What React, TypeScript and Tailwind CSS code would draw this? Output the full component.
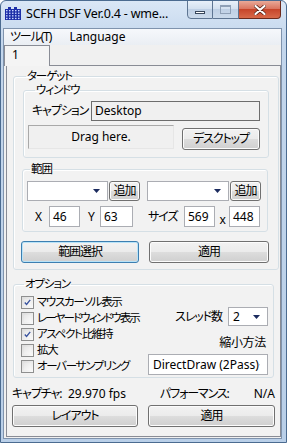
import React from 'react';

const ui = "font-['Noto_Sans','Noto_Sans_CJK_JP',sans-serif] [font-feature-settings:'palt'] tracking-[-1.1px] whitespace-nowrap";
const btnBg = 'bg-[linear-gradient(#f2f2f2,#ebebeb_50%,#dddddd_50%,#cfcfcf)]';

function Arrow() {
  return (
    <svg width="7" height="4" viewBox="0 0 7 4">
      <path d="M0 0h7L3.5 4z" fill="#1b2b5e" />
    </svg>
  );
}

function Combo({ className, value }: { className: string; value?: string }) {
  return (
    <div className={`${className} bg-white border border-[#abadb3] flex items-center pl-[4px] pr-[7px]`}>
      <span className="flex-1 text-[12px] leading-none tracking-normal">{value}</span>
      <Arrow />
    </div>
  );
}

function Btn({ className, children, focused }: { className: string; children: React.ReactNode; focused?: boolean }) {
  return (
    <div
      className={`${className} ${btnBg} flex items-center justify-center rounded-[3px] border text-[12px] leading-none ${
        focused ? 'border-[#3c7fb1] shadow-[inset_0_0_0_1px_#b8e3f8]' : 'border-[#707070] shadow-[inset_0_0_0_1px_#fcfcfc]'
      }`}
    >
      {children}
    </div>
  );
}

function Field({ className, value }: { className: string; value: string }) {
  return (
    <div className={`${className} bg-white border border-[#abadb3] flex items-center pl-[3px] text-[12px] leading-none tracking-normal`}>{value}</div>
  );
}

function Check({ checked, label, tight }: { checked?: boolean; label: string; tight?: boolean }) {
  return (
    <div className="h-[16px] flex items-center gap-[3px]">
      <div className="shrink-0 w-[13px] h-[13px] border border-[#8e8f8f] bg-[linear-gradient(135deg,#dcdcdc,#fbfbfb)] p-[2px]">
        <div className="w-full h-full bg-[linear-gradient(135deg,#e6e6e6,#f9f9f9)] flex items-center justify-center">
          {checked && (
            <svg width="9" height="9" viewBox="0 0 9 9">
              <path d="M1 4.5l2.3 2.5L8 1.2" stroke="#3b55a0" strokeWidth="1.8" fill="none" />
            </svg>
          )}
        </div>
      </div>
      <span className={`text-[11.5px] leading-none ${tight ? 'tracking-[-1.9px]' : 'tracking-[-1.3px]'}`}>{label}</span>
    </div>
  );
}

function Group({ className, label, children }: { className: string; label: string; children: React.ReactNode }) {
  return (
    <fieldset className={`${className} border border-[#d5dfe5] rounded-[3px] shadow-[inset_1px_1px_0_#fff]`}>
      <legend className="ml-[3px] px-[1px] text-[11.5px] leading-[12px]">{label}</legend>
      {children}
    </fieldset>
  );
}

function AppIcon() {
  return (
    <svg width="16" height="14" viewBox="0 0 16 14">
      <rect x="0" y="2" width="16" height="11" fill="#1d2fa8" />
      {[0, 1, 2, 3].map((r) =>
        [0, 1, 2, 3, 4].map((c) => (
          <rect key={`${r}-${c}`} x={1 + c * 3} y={3 + r * 2.6} width="1.5" height="1.3" fill="#c9d6ff" />
        ))
      )}
      <rect x="3" y="0" width="3" height="2" fill="#1d2fa8" />
      <rect x="9" y="0" width="3" height="2" fill="#1d2fa8" />
    </svg>
  );
}

export default function App() {
  return (
    <div className={`${ui} w-[287px] h-[443px] flex flex-col bg-[linear-gradient(#dae7f6,#c3d6ec_40px,#b9cfe8)] border border-[#4b6b90] rounded-t-[6px] overflow-hidden text-black text-[12px] leading-[14px]`}>
      {/* title bar */}
      <div className="h-[27px] flex items-start shrink-0">
        <div className="flex items-center gap-[5px] pl-[4px] pt-[6px]">
          <AppIcon />
          <span className="text-[12.5px] leading-none font-['Noto_Sans',sans-serif] tracking-[-0.2px]">SCFH DSF Ver.0.4 - wme...</span>
        </div>
        <div className="ml-auto mr-[5px] mt-[-1px] flex h-[19px]">
          <div className="w-[26px] border border-[#5e7592] rounded-bl-[4px] bg-[linear-gradient(#e8f0f9,#d2dfee_50%,#bfd0e5_50%,#cbdaeb)] flex items-center justify-center">
            <div className="w-[10px] h-[3px] border border-[#38475b] bg-white mt-[5px]" />
          </div>
          <div className="w-[26px] border border-l-0 border-[#5e7592] bg-[linear-gradient(#e8f0f9,#d2dfee_50%,#bfd0e5_50%,#cbdaeb)] flex items-center justify-center">
            <div className="w-[11px] h-[9px] border border-[#8fa0b6] border-t-[2px] bg-transparent" />
          </div>
          <div className="w-[42px] border border-l-0 border-[#6d2a1c] rounded-br-[4px] bg-[linear-gradient(#e9a998,#d9705a_50%,#c7452a_50%,#d86a4a)] flex items-center justify-center">
            <svg width="12" height="10" viewBox="0 0 12 10">
              <path d="M1.5 1l9 8M10.5 1l-9 8" stroke="#5a2418" strokeWidth="3.6" strokeLinecap="round" />
              <path d="M1.5 1l9 8M10.5 1l-9 8" stroke="#fff" strokeWidth="2.2" strokeLinecap="round" />
            </svg>
          </div>
        </div>
      </div>

      {/* client */}
      <div className="flex-1 ml-[2px] mr-[4px] mb-[3px] flex flex-col bg-[#f0f0f0] border border-[#7f93ad]">
        <div className="h-[16px] flex items-center gap-[18px] pl-[6px] bg-[linear-gradient(#f6f8fb,#eaeef3)]">
          <span>ツール(T)</span>
          <span className="tracking-normal">Language</span>
        </div>
        <div className="h-[20px] flex items-end shrink-0">
          <div className="relative z-10 w-[46px] h-[21px] mb-[-1px] border border-b-0 border-[#898c95] bg-[#f4f4f4] pl-[7px] pt-[3px] leading-none">
            1
          </div>
        </div>
        <div className="flex-1 ml-[2px] mb-[1px] border border-[#898c95] bg-[#f2f2f2] flex flex-col">
          <Group className="mx-[6px] mt-[4px] px-[9px] pb-[6px]" label="ターゲット">
            <Group className="mt-[2px] px-[8px] pb-[7px]" label="ウィンドウ">
              <div className="mt-[5px] flex items-center">
                <span className="w-[59px]">キャプション</span>
                <div className="flex-1 h-[20px] border border-[#6d6d6d] bg-[#f0f0f0] flex items-center pl-[3px] leading-none tracking-normal">
                  Desktop
                </div>
              </div>
              <div className="mt-[4px] flex items-start gap-[8px] ml-[-4px]">
                <div className="w-[146px] h-[24px] border border-t-[#a9a9a9] border-l-[#a9a9a9] border-r-[#e6e6e6] border-b-[#e6e6e6] bg-[#f0f0f0] flex items-center justify-center leading-none tracking-normal">
                  Drag here.
                </div>
                <Btn className="flex-1 h-[22px] mt-[3px]">デスクトップ</Btn>
              </div>
            </Group>
            <Group className="mt-[5px] ml-[-1px] mr-[1px] px-[4px] pb-[4px]" label="範囲">
              <div className="mt-[6px] flex items-center">
                <Combo className="w-[81px] h-[20px]" />
                <Btn className="ml-[1px] w-[31px] h-[20px]">追加</Btn>
                <Combo className="ml-[7px] w-[82px] h-[20px]" />
                <Btn className="ml-[1px] w-[31px] h-[20px]">追加</Btn>
              </div>
              <div className="mt-[5px] flex items-center">
                <span className="ml-[8px] w-[14px]">X</span>
                <Field className="w-[31px] h-[21px]" value="46" />
                <span className="ml-[8px] w-[12px]">Y</span>
                <Field className="w-[33px] h-[21px]" value="63" />
                <span className="ml-[15px] w-[36px]">サイズ</span>
                <Field className="w-[31px] h-[21px]" value="569" />
                <span className="w-[14px] text-center mt-[6px] leading-none">x</span>
                <Field className="w-[31px] h-[21px]" value="448" />
              </div>
            </Group>
            <div className="mt-[9px] ml-[-2px] flex gap-[10px]">
              <Btn focused className="w-[118px] h-[22px]">範囲選択</Btn>
              <Btn className="w-[120px] h-[22px]">適用</Btn>
            </div>
          </Group>

          <Group className="mx-[6px] mt-[8px] pl-[7px] pr-[5px] pb-[2px]" label="オプション">
            <div className="flex">
              <div className="shrink-0 w-[126px] mt-[4px] flex flex-col">
                <Check checked label="マウスカーソル表示" />
                <Check tight label="レーヤードウィンドウ表示" />
                <Check checked label="アスペクト比維持" />
                <Check label="拡大" />
                <Check label="オーバーサンプリング" />
              </div>
              <div className="flex-1 min-w-0 flex flex-col items-end">
                <div className="mt-[17px] flex items-center gap-[6px]">
                  <span>スレッド数</span>
                  <Combo className="w-[40px] h-[19px]" value="2" />
                </div>
                <span className="mt-[10px] mr-[2px] leading-[14px] tracking-[-0.3px]">縮小方法</span>
                <Combo className="mt-[4px] w-[120px] h-[21px]" value="DirectDraw (2Pass)" />
              </div>
            </div>
          </Group>

          <div className="mt-[8px] h-[16px] flex items-center px-[5px]">
            <span className="w-[56px]">キャプチャ:</span>
            <span className="tracking-normal">29.970 fps</span>
            <span className="ml-auto">パフォーマンス:</span>
            <span className="ml-[25px] tracking-normal">N/A</span>
          </div>
          <div className="mt-[3px] ml-[5px] flex gap-[10px]">
            <Btn className="w-[126px] h-[22px]">レイアウト</Btn>
            <Btn className="w-[127px] h-[22px]">適用</Btn>
          </div>
        </div>
      </div>
    </div>
  );
}
